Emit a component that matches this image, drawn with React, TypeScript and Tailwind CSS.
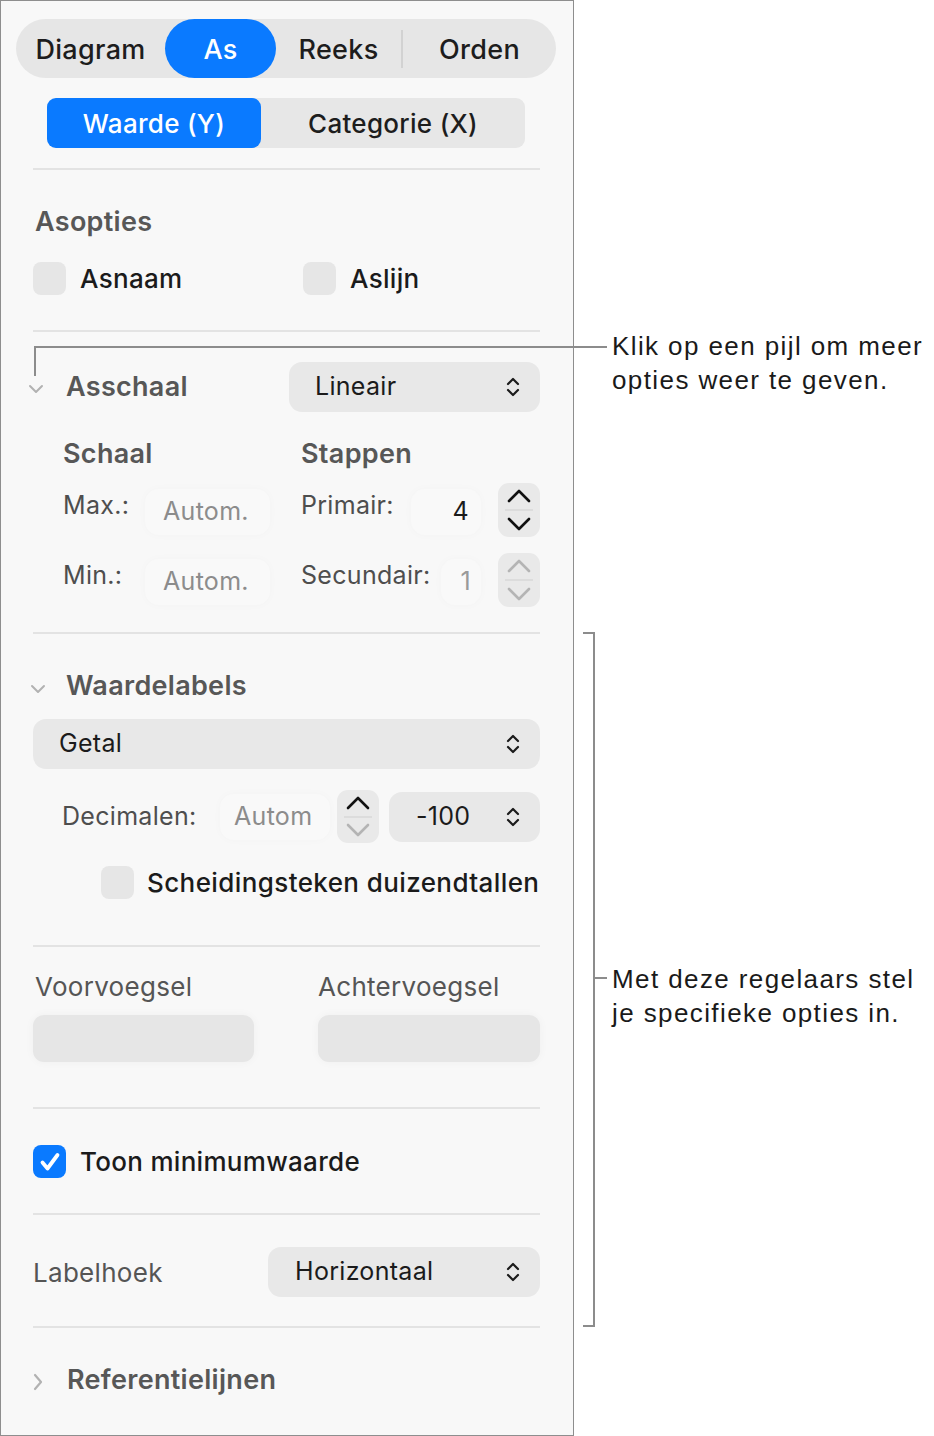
import type { ReactNode } from "react";

const PANEL_FONT = { fontFamily: "Inter, 'Noto Sans', sans-serif" };
const NOTE_FONT = { fontFamily: "'Liberation Sans', Arial, sans-serif" };

function UpDown({ className = "" }: { className?: string }) {
  return (
    <svg className={className} width="16" height="24" viewBox="0 0 16 24" fill="none" stroke="currentColor" strokeWidth={2.2} strokeLinecap="round" strokeLinejoin="round">
      <polyline points="3,9 8,4 13,9" />
      <polyline points="3,15 8,20 13,15" />
    </svg>
  );
}

function Stepper({ h, downMuted, upMuted }: { h: string; downMuted?: boolean; upMuted?: boolean }) {
  return (
    <div className={`flex ${h} w-[42px] flex-col items-center justify-between rounded-[11px] bg-[#e9e9e9] py-[6px]`}>
      <svg width="24" height="14" viewBox="0 0 24 14" fill="none" stroke={upMuted ? "#b4b4b4" : "#111"} strokeWidth={2.6} strokeLinecap="round" strokeLinejoin="round">
        <polyline points="2,12 12,2 22,12" />
      </svg>
      <div className="h-[2px] w-[28px] bg-[#dcdcdc]" />
      <svg width="24" height="14" viewBox="0 0 24 14" fill="none" stroke={downMuted ? "#b4b4b4" : "#111"} strokeWidth={2.6} strokeLinecap="round" strokeLinejoin="round">
        <polyline points="2,2 12,12 22,2" />
      </svg>
    </div>
  );
}

function Select({ label, className = "", textPad = "pl-[26px]" }: { label: string; className?: string; textPad?: string }) {
  return (
    <div className={`flex h-[50px] items-center justify-between rounded-[13px] bg-[#e8e8e8] pr-[19px] ${textPad} ${className}`}>
      <span className="text-[25px] tracking-[0.3px] text-[#1b1b1b]">{label}</span>
      <UpDown className="text-[#1b1b1b]" />
    </div>
  );
}

function Box({ checked }: { checked?: boolean }) {
  if (checked) {
    return (
      <div className="flex h-[33px] w-[33px] shrink-0 items-center justify-center rounded-[8px] bg-[#0a7aff]">
        <svg width="24" height="24" viewBox="0 0 24 24" fill="none" stroke="white" strokeWidth={3.8} strokeLinecap="round" strokeLinejoin="round">
          <polyline points="4.5,12.5 9.5,18.5 19.5,5" />
        </svg>
      </div>
    );
  }
  return <div className="h-[33px] w-[33px] shrink-0 rounded-[8px] bg-[#e6e6e6]" />;
}

function Divider({ mt }: { mt: string }) {
  return <div className={`${mt} h-[2px] w-full bg-[#e3e3e3]`} />;
}

function SoftField({ children, className = "" }: { children?: ReactNode; className?: string }) {
  return (
    <div className={`flex h-[46px] items-center rounded-[14px] bg-[#f9f9f9] shadow-[0_0_10px_rgba(0,0,0,0.025)] ${className}`}>
      {children}
    </div>
  );
}

function Disclosure({ open }: { open: boolean }) {
  return open ? (
    <svg width="16" height="10" viewBox="0 0 16 10" fill="none" stroke="#b2b2b2" strokeWidth={2} strokeLinecap="round" strokeLinejoin="round">
      <polyline points="2,2 8,8 14,2" />
    </svg>
  ) : (
    <svg width="10" height="18" viewBox="0 0 10 18" fill="none" stroke="#b2b2b2" strokeWidth={2.2} strokeLinecap="round" strokeLinejoin="round">
      <polyline points="2,2 8,9 2,16" />
    </svg>
  );
}

export default function App() {
  const tabs = ["Diagram", "As", "Reeks", "Orden"];

  return (
    <div className="relative flex h-[1436px] w-[934px] bg-white" style={PANEL_FONT}>
      {/* Inspector panel */}
      <div className="flex h-full w-[574px] flex-col border border-[#8e8e8e] bg-[#f8f8f8]">
        {/* Top tabs */}
        <div className="ml-[15px] mt-[18px] flex h-[59px] w-[540px] items-center rounded-full bg-[#e6e6e6] text-[27px] font-medium tracking-[0.3px] text-[#1d1d1d]">
          <div className="flex w-[149px] justify-center pt-[3px]">{tabs[0]}</div>
          <div className="flex h-full w-[111px] items-center justify-center rounded-full bg-[#0a7aff] pt-[3px] text-white">{tabs[1]}</div>
          <div className="flex w-[125px] justify-center pt-[3px]">{tabs[2]}</div>
          <div className="h-[38px] w-[2px] bg-[#d2d2d2]" />
          <div className="flex flex-1 justify-center pt-[3px]">{tabs[3]}</div>
        </div>

        {/* Axis switch */}
        <div className="ml-[46px] mt-[20px] flex h-[50px] w-[478px] rounded-[9px] bg-[#e7e7e7] text-[26px] font-medium tracking-[0.3px]">
          <div className="flex w-[214px] items-center justify-center rounded-[9px] bg-[#0a7aff] text-white">Waarde (Y)</div>
          <div className="flex flex-1 items-center justify-center text-[#1d1d1d]">Categorie (X)</div>
        </div>

        <div className="flex flex-col pl-[32px] pr-[33px] tracking-[0.3px]">
          <Divider mt="mt-[20px]" />

          {/* Axis options */}
          <div className="ml-[2px] mt-[36px] flex h-[32px] items-center text-[27px] font-semibold text-[#575757]">Asopties</div>
          <div className="mt-[24px] flex h-[33px] items-center text-[26px] font-medium text-[#1b1b1b]">
            <div className="flex w-[270px] items-center gap-[14px]">
              <Box />
              <span>Asnaam</span>
            </div>
            <div className="flex items-center gap-[14px]">
              <Box />
              <span>Aslijn</span>
            </div>
          </div>

          <Divider mt="mt-[35px]" />

          {/* Axis scale */}
          <div className="mt-[30px] flex h-[50px] items-center">
            <div className="-ml-[5px] flex w-[38px] items-center pt-[4px]">
              <Disclosure open />
            </div>
            <span className="w-[223px] text-[27px] font-semibold text-[#575757]">Asschaal</span>
            <Select label="Lineair" className="w-[251px]" />
          </div>

          <div className="mt-[26px] flex h-[32px] items-center text-[27px] font-semibold text-[#575757]">
            <span className="ml-[30px] w-[238px]">Schaal</span>
            <span>Stappen</span>
          </div>

          <div className="mt-[13px] flex h-[54px] items-center text-[25px]">
            <span className="mb-[8px] ml-[30px] w-[82px] text-[#4e4e4e]">Max.:</span>
            <SoftField className="mt-[4px] w-[125px] pl-[18px] text-[#8c8c8c]">Autom.</SoftField>
            <span className="mb-[8px] ml-[31px] w-[110px] text-[#4e4e4e]">Primair:</span>
            <SoftField className="mt-[4px] w-[70px] justify-end pr-[12px] text-[#1b1b1b]">4</SoftField>
            <div className="ml-auto">
              <Stepper h="h-[54px]" />
            </div>
          </div>

          <div className="mt-[16px] flex h-[54px] items-center text-[25px]">
            <span className="mb-[8px] ml-[30px] w-[82px] text-[#4e4e4e]">Min.:</span>
            <SoftField className="mt-[4px] w-[125px] pl-[18px] text-[#8c8c8c]">Autom.</SoftField>
            <span className="mb-[8px] ml-[31px] w-[140px] text-[#4e4e4e]">Secundair:</span>
            <SoftField className="mt-[4px] w-[40px] justify-end pr-[10px] text-[#9a9a9a]">1</SoftField>
            <div className="ml-auto">
              <Stepper h="h-[54px]" upMuted downMuted />
            </div>
          </div>

          <Divider mt="mt-[25px]" />

          {/* Value labels */}
          <div className="mt-[36px] flex h-[32px] items-center">
            <div className="-ml-[3px] flex w-[36px] items-center pt-[6px]">
              <Disclosure open />
            </div>
            <span className="text-[27px] font-semibold text-[#575757]">Waardelabels</span>
          </div>

          <Select label="Getal" className="mt-[17px] w-full" />

          <div className="mt-[21px] flex h-[53px] items-center text-[25px]">
            <span className="ml-[29px] w-[158px] text-[#4e4e4e]">Decimalen:</span>
            <SoftField className="w-[110px] pl-[14px] text-[#8c8c8c]">Autom</SoftField>
            <div className="ml-[7px]">
              <Stepper h="h-[53px]" downMuted />
            </div>
            <Select label="-100" className="ml-auto w-[151px]" textPad="pl-[27px]" />
          </div>

          <div className="mt-[23px] flex h-[33px] items-center gap-[13px] pl-[68px] text-[26px] font-medium text-[#1b1b1b]">
            <Box />
            <span className="whitespace-nowrap tracking-[0.4px]">Scheidingsteken duizendtallen</span>
          </div>

          <Divider mt="mt-[46px]" />

          {/* Prefix / suffix */}
          <div className="mt-[23px] flex h-[32px] items-center text-[26px] text-[#555]">
            <span className="ml-[2px] w-[283px]">Voorvoegsel</span>
            <span>Achtervoegsel</span>
          </div>
          <div className="mt-[13px] flex h-[47px] justify-between">
            <div className="w-[221px] rounded-[11px] bg-[#e6e6e6] shadow-[0_0_10px_rgba(0,0,0,0.04)]" />
            <div className="w-[222px] rounded-[11px] bg-[#e6e6e6] shadow-[0_0_10px_rgba(0,0,0,0.04)]" />
          </div>

          <Divider mt="mt-[45px]" />

          <div className="mt-[36px] flex h-[33px] items-center gap-[14px] text-[26px] font-medium text-[#1b1b1b]">
            <Box checked />
            <span>Toon minimumwaarde</span>
          </div>

          <Divider mt="mt-[35px]" />

          {/* Label angle */}
          <div className="mt-[32px] flex h-[50px] items-center justify-between">
            <span className="text-[26px] text-[#555]">Labelhoek</span>
            <Select label="Horizontaal" className="w-[272px]" textPad="pl-[27px]" />
          </div>

          <Divider mt="mt-[29px]" />

          {/* Reference lines */}
          <div className="mt-[36px] flex h-[32px] items-center">
            <div className="flex w-[34px] items-center pt-[4px]">
              <Disclosure open={false} />
            </div>
            <span className="text-[27px] font-semibold text-[#575757]">Referentielijnen</span>
          </div>
        </div>
      </div>

      {/* Callout lines */}
      <div className="absolute left-[34px] top-[346px] h-[2px] w-[573px] bg-[#8c8c8c]" />
      <div className="absolute left-[34px] top-[346px] h-[30px] w-[2px] bg-[#8c8c8c]" />

      <div className="absolute left-[593px] top-[632px] h-[695px] w-[2px] bg-[#8c8c8c]" />
      <div className="absolute left-[583px] top-[632px] h-[2px] w-[12px] bg-[#8c8c8c]" />
      <div className="absolute left-[583px] top-[1325px] h-[2px] w-[12px] bg-[#8c8c8c]" />
      <div className="absolute left-[595px] top-[977px] h-[2px] w-[12px] bg-[#8c8c8c]" />

      {/* Callout notes */}
      <div className="absolute left-[612px] top-[329px] text-[26px] leading-[34px] tracking-[1.4px] text-[#1a1a1a]" style={NOTE_FONT}>
        <p>Klik op een pijl om meer</p>
        <p>opties weer te geven.</p>
      </div>
      <div className="absolute left-[612px] top-[962px] text-[26px] leading-[34px] tracking-[1.4px] text-[#1a1a1a]" style={NOTE_FONT}>
        <p>Met deze regelaars stel</p>
        <p>je specifieke opties in.</p>
      </div>
    </div>
  );
}
